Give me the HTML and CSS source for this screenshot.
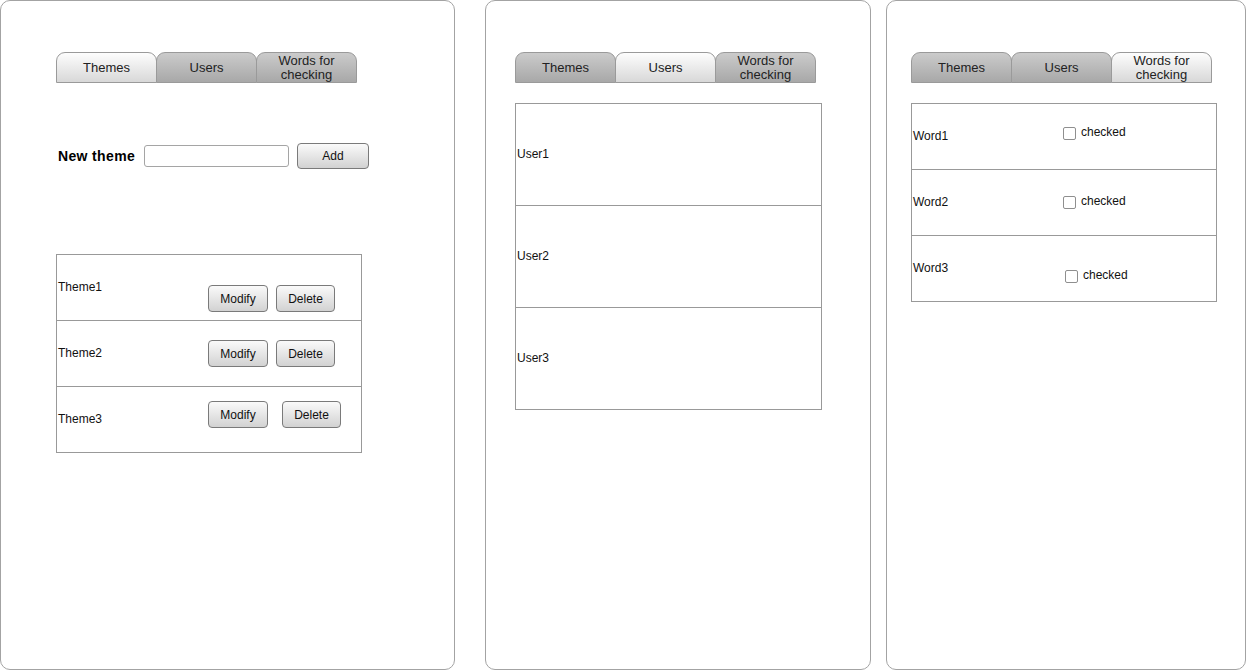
FILE: index.html
```html
<!DOCTYPE html>
<html>
<head>
<meta charset="utf-8">
<link rel="stylesheet" href="styles.css">
</head>
<body>
<div class="screens">
  <section class="panel panel-themes">
    <div class="tabs">
      <div class="tab active">Themes</div>
      <div class="tab">Users</div>
      <div class="tab two">Words for<br>checking</div>
    </div>
    <div class="new-theme">
      <span class="nt-label">New theme</span>
      <span class="nt-input"></span>
      <span class="btn btn-add">Add</span>
    </div>
    <div class="table table-themes">
      <div class="row r1">
        <span class="cell-label">Theme1</span>
        <div class="actions"><span class="btn btn-mod">Modify</span><span class="btn btn-del">Delete</span></div>
      </div>
      <div class="row r2">
        <span class="cell-label">Theme2</span>
        <div class="actions"><span class="btn btn-mod">Modify</span><span class="btn btn-del">Delete</span></div>
      </div>
      <div class="row r3">
        <span class="cell-label">Theme3</span>
        <div class="actions"><span class="btn btn-mod">Modify</span><span class="btn btn-del wide-gap">Delete</span></div>
      </div>
    </div>
  </section>

  <section class="panel panel-users">
    <div class="tabs">
      <div class="tab">Themes</div>
      <div class="tab active">Users</div>
      <div class="tab two">Words for<br>checking</div>
    </div>
    <div class="table table-users">
      <div class="urow"><span class="cell-label">User1</span></div>
      <div class="urow"><span class="cell-label">User2</span></div>
      <div class="urow"><span class="cell-label">User3</span></div>
    </div>
  </section>

  <section class="panel panel-words">
    <div class="tabs">
      <div class="tab">Themes</div>
      <div class="tab">Users</div>
      <div class="tab two active">Words for<br>checking</div>
    </div>
    <div class="table table-words">
      <div class="wrow w1">
        <span class="cell-label">Word1</span>
        <span class="check"><span class="box"></span><span class="check-text">checked</span></span>
      </div>
      <div class="wrow w2">
        <span class="cell-label">Word2</span>
        <span class="check"><span class="box"></span><span class="check-text">checked</span></span>
      </div>
      <div class="wrow w3">
        <span class="cell-label">Word3</span>
        <span class="check"><span class="box"></span><span class="check-text">checked</span></span>
      </div>
    </div>
  </section>
</div>
</body>
</html>
```

FILE: styles.css
```css
* { box-sizing: border-box; }
html, body { margin: 0; padding: 0; background: #fff; }
body {
  font-family: "Liberation Sans", Arial, sans-serif;
  font-size: 12px;
  color: #111;
  width: 1246px;
  height: 670px;
  overflow: hidden;
}
.screens { display: flex; height: 670px; }

.panel {
  height: 670px;
  border: 1px solid #a3a3a3;
  border-radius: 10px;
  background: #fff;
  padding-top: 51px;
}
.panel-themes { width: 455px; padding-left: 55px; }
.panel-users { width: 386px; margin-left: 30px; padding-left: 29px; }
.panel-words { width: 360px; margin-left: 15px; padding-left: 24px; }

/* Tabs */
.tabs { display: flex; height: 31px; }
.tab {
  width: 101px;
  height: 31px;
  margin-right: -1px;
  border: 1px solid #9a9a9a;
  border-radius: 9px 9px 0 0;
  background: linear-gradient(#cbcbcb, #a8a8a8);
  font-size: 13px;
  line-height: 14px;
  color: #222;
  display: flex;
  align-items: center;
  justify-content: center;
  text-align: center;
  padding-top: 1px;
}
.tab.two { padding-top: 0; }
.tab.active { background: linear-gradient(#fdfdfd, #d8d8d8); }

/* New theme row */
.new-theme {
  display: flex;
  align-items: center;
  margin-top: 60px;
  height: 26px;
  padding-left: 2px;
}
.nt-label {
  font-weight: bold;
  font-size: 14px;
  letter-spacing: 0.35px;
  color: #000;
  width: 86px;
}
.nt-input {
  width: 145px;
  height: 22px;
  border: 1px solid #a5a5a5;
  border-radius: 3px;
  background: #fff;
}
.btn {
  display: inline-flex;
  align-items: center;
  justify-content: center;
  height: 27px;
  border: 1px solid #7a7a7a;
  border-radius: 4px;
  background: linear-gradient(#fafafa, #d2d2d2);
  font-size: 12px;
  color: #111;
}
.btn-add { width: 72px; height: 26px; margin-left: 8px; }

/* Tables */
.table { border: 1px solid #999; width: 306px; }
.table-themes { margin-top: 85px; }
.table-users { margin-top: 20px; width: 307px; }
.table-words { margin-top: 20px; }

.cell-label { display: block; line-height: 14px; padding-left: 1px; }

.row {
  height: 66px;
  display: flex;
  align-items: flex-start;
  border-top: 1px solid #999;
}
.row.r1 { border-top: 0; height: 65px; }
.row .cell-label { width: 151px; }
.actions { display: flex; }
.btn-mod { width: 60px; }
.btn-del { width: 59px; margin-left: 8px; }
.btn-del.wide-gap { margin-left: 14px; }
.r1 .cell-label { margin-top: 25px; }
.r1 .actions { margin-top: 30px; }
.r2 .cell-label { margin-top: 25px; }
.r2 .actions { margin-top: 19px; }
.r3 .cell-label { margin-top: 25px; }
.r3 .actions { margin-top: 14px; }

.urow {
  height: 102px;
  border-top: 1px solid #999;
  padding-top: 43px;
}
.urow:first-child { border-top: 0; height: 101px; }

.wrow {
  height: 66px;
  border-top: 1px solid #999;
  display: flex;
  align-items: flex-start;
}
.wrow.w1 { border-top: 0; height: 65px; }
.wrow .cell-label { width: 151px; }
.check { display: flex; align-items: flex-start; }
.box {
  width: 13px;
  height: 13px;
  border: 1px solid #8f8f8f;
  border-radius: 2px;
  background: #fff;
}
.check-text { line-height: 14px; margin-left: 5px; }

.w1 .cell-label { margin-top: 25px; }
.w1 .check { margin-top: 22px; }
.w1 .box { margin-top: 1px; }
.w1 .check-text { margin-top: -1px; }
.w2 .cell-label { margin-top: 25px; }
.w2 .check { margin-top: 25px; }
.w2 .box { margin-top: 1px; }
.w2 .check-text { margin-top: -1px; }
.w3 .cell-label { margin-top: 25px; }
.w3 .check { margin-top: 33px; margin-left: 2px; }
.w3 .box { margin-top: 1px; }
.w3 .check-text { margin-top: -1px; }
```
